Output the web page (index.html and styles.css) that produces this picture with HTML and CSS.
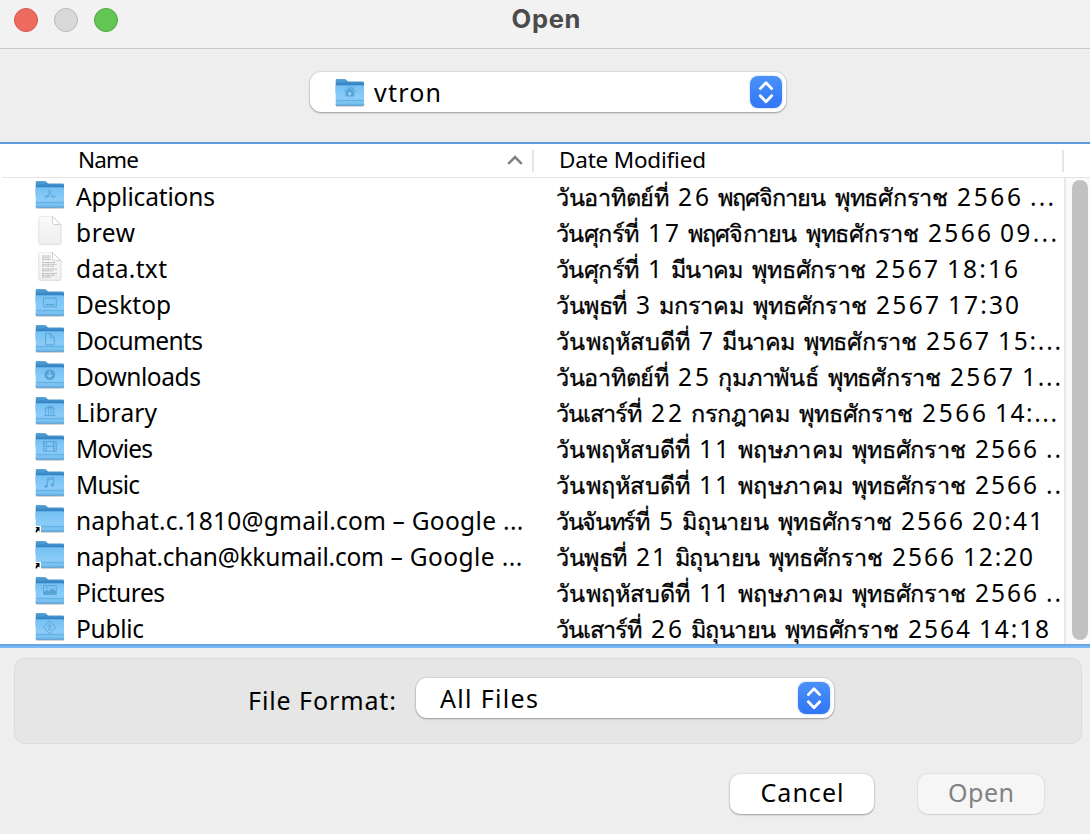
FILE: index.html
```html
<!DOCTYPE html>
<html lang="en">
<head>
<meta charset="utf-8">
<title>Open</title>
<link rel="stylesheet" href="styles.css">
</head>
<body>
<svg class="defs" aria-hidden="true">
  <defs>
    <linearGradient id="g-back" x1="0" y1="0" x2="0" y2="1"><stop offset="0" stop-color="#5ba6d8"/><stop offset=".45" stop-color="#2f7fc0"/></linearGradient>
    <linearGradient id="g-front" x1="0" y1="0" x2="0" y2="1"><stop offset="0" stop-color="#74c0f2"/><stop offset=".6" stop-color="#8accf8"/><stop offset="1" stop-color="#71bcec"/></linearGradient>
    <linearGradient id="g-page" x1="0" y1="0" x2="0" y2="1"><stop offset="0" stop-color="#fafafa"/><stop offset="1" stop-color="#efefef"/></linearGradient>
    <symbol id="folder" viewBox="0 0 30 30">
      <rect x=".8" y="25" width="28.400" height="4" rx="1.500" fill="#000" opacity=".12"/>
      <rect x="1" y="25" width="28" height="3.300" rx="1" fill="#000" opacity=".2"/>
      <path d="M.7 2.200Q.7 1 1.900 1H9.500q1 0 1.800.8l1.200 1.200q.7.500 1.600.500h13.500q1.400 0 1.400 1.400V15H.7z" fill="url(#g-back)"/>
      <path d="M.7 8.600Q.7 7.200 2.100 7.200h25.500q1.400 0 1.400 1.400v17.600q0 1.300-1.300 1.300H2q-1.300 0-1.300-1.300z" fill="url(#g-front)"/>
      <path d="M1 22.600H29" stroke="#5aaee3" stroke-width=".9"/>
      <path d="M.9 26.100q0 1.100 1.100 1.100h25.700q1.100 0 1.100-1.100" fill="none" stroke="#4b9bd2" stroke-width=".8"/>
    </symbol>
    <symbol id="page" viewBox="0 0 30 30">
      <path d="M5 .9h13l8.500 8.500V27q0 2-2 2H5.500q-2 0-2-2V2.600Q3.500.900 5 .900z" fill="#000" opacity=".12"/>
      <path d="M5.700.5H17.500l8.300 8v17.700q0 1.900-1.900 1.900H5.700q-1.900 0-1.900-1.900V2.400Q3.800.5 5.700.5z" fill="url(#g-page)" stroke="#dedede" stroke-width=".6"/>
      <path d="M17.500.6v6q0 2 2 2h6.300z" fill="#fff" stroke="#bdbdbd" stroke-width=".7"/>
    </symbol>
    <symbol id="alias" viewBox="0 0 6 8">
      <path d="M0 0h6v8H0z" fill="#fff"/><path d="M.5 1.500h4v4.500l-1.200-1.100Q2 5.300 2 7L.6 6.800Q.400 4.600 1.900 3.300z" fill="#000"/>
    </symbol>
    <symbol id="updown" viewBox="0 0 32 32">
      <path d="M10.300 12.600 16 6.700l5.700 5.900M10.300 19.800 16 25.700l5.700-5.900" fill="none" stroke="#fff" stroke-width="2.800" stroke-linecap="round" stroke-linejoin="round"/>
    </symbol>
  </defs>
</svg>

<header class="titlebar">
  <span class="light red"></span><span class="light grey"></span><span class="light green"></span>
  <h1 class="title"><span data-w="69">Open</span></h1>
</header>

<div class="location">
  <div class="select select-path">
    <svg class="icon" viewBox="0 0 30 30"><use href="#folder"/><g class="mark"><path d="M8.500 14 14.800 8l6.300 6M18.500 8.500V11"/><path class="solid" d="M10.500 13.500 14.800 9.500l4.400 4V18.500h-8.700z"/><path class="hole" d="M13.500 14.300h2.600v3h-2.600z"/></g></svg>
    <span class="select-text" data-w="67">vtron</span>
    <span class="stepper"><svg viewBox="0 0 32 32"><use href="#updown"/></svg></span>
  </div>
</div>

<main class="list">
  <div class="list-head">
    <div class="col-name"><span data-w="61">Name</span><svg class="sort" viewBox="0 0 16 10"><path d="M2 8.200 8 2.200l6 6"/></svg></div>
    <div class="col-date"><span data-w="147">Date Modified</span></div>
  </div>
  <div class="list-body">
    <div class="rows">
      <div class="row"><svg class="icon" viewBox="0 0 30 30"><use href="#folder"/><g class="mark"><path d="M15.500 9.500 11.500 17.500M13.700 9.500 18.500 18M9 15.600h6M17 15.600h4M11 18l-.7 1"/></g></svg><span class="name" data-w="139">Applications</span>
        <div class="date"><b data-w="113">วันอาทิตย์ที่</b><i data-w="31">26</i><b data-w="108">พฤศจิกายน</b><b data-w="113">พุทธศักราช</b><i data-w="64">2566</i><i data-w="24">...</i></div></div>
      <div class="row"><svg class="icon" viewBox="0 0 30 30"><use href="#page"/></svg><span class="name" data-w="59">brew</span>
        <div class="date"><b data-w="83">วันศุกร์ที่</b><i data-w="31">17</i><b data-w="109">พฤศจิกายน</b><b data-w="113">พุทธศักราช</b><i data-w="63">2566</i><i data-w="57">09...</i></div></div>
      <div class="row"><svg class="icon" viewBox="0 0 30 30"><use href="#page"/><path class="lines" d="M7 4h9M7 5.800h8M7 7.600h9M7 10.500h13M7 12.300h15M7 14.100h12M7 17h15M7 18.800h11M7 21.500h15M7 23.300h13M7 25h9"/></svg><span class="name" data-w="91">data.txt</span>
        <div class="date"><b data-w="83">วันศุกร์ที่</b><i data-w="15">1</i><b data-w="72">มีนาคม</b><b data-w="114">พุทธศักราช</b><i data-w="63">2567</i><i data-w="71">18:16</i></div></div>
      <div class="row"><svg class="icon" viewBox="0 0 30 30"><use href="#folder"/><g class="mark"><path d="M8.500 9.500h12.800v8.800H8.500z"/><path class="solid" d="M10.500 15.300h9v1.500h-9z"/></g></svg><span class="name" data-w="95">Desktop</span>
        <div class="date"><b data-w="71">วันพุธที่</b><i data-w="15">3</i><b data-w="85">มกราคม</b><b data-w="114">พุทธศักราช</b><i data-w="63">2567</i><i data-w="71">17:30</i></div></div>
      <div class="row"><svg class="icon" viewBox="0 0 30 30"><use href="#folder"/><g class="mark"><path d="M10.500 8.700h5l3.800 4v7.600h-8.800zM15.400 8.700v4h4"/></g></svg><span class="name" data-w="127">Documents</span>
        <div class="date"><b data-w="134">วันพฤหัสบดีที่</b><i data-w="14">7</i><b data-w="73">มีนาคม</b><b data-w="113">พุทธศักราช</b><i data-w="63">2567</i><i data-w="63">15:...</i></div></div>
      <div class="row"><svg class="icon" viewBox="0 0 30 30"><use href="#folder"/><g class="mark"><circle class="solid" cx="14.800" cy="14" r="5.400"/><path class="light-line" d="M14.800 11v5.500M12.500 14.300l2.300 2.300 2.300-2.300"/></g></svg><span class="name" data-w="125">Downloads</span>
        <div class="date"><b data-w="113">วันอาทิตย์ที่</b><i data-w="31">25</i><b data-w="101">กุมภาพันธ์</b><b data-w="113">พุทธศักราช</b><i data-w="63">2567</i><i data-w="39">1...</i></div></div>
      <div class="row"><svg class="icon" viewBox="0 0 30 30"><use href="#folder"/><g class="mark"><path class="solid" d="M9 11.800 14.800 8.800l5.900 3z"/><path d="M10.700 12v6.500M13.400 12v6.500M16.100 12v6.500M18.800 12v6.500M8.800 19h12"/></g></svg><span class="name" data-w="81">Library</span>
        <div class="date"><b data-w="86">วันเสาร์ที่</b><i data-w="31">22</i><b data-w="99">กรกฎาคม</b><b data-w="114">พุทธศักราช</b><i data-w="64">2566</i><i data-w="62">14:...</i></div></div>
      <div class="row"><svg class="icon" viewBox="0 0 30 30"><use href="#folder"/><g class="mark"><path d="M8.500 9h12.800v9.600H8.500zM11.200 9v9.600M18.600 9v9.600M11.200 13.800h7.400"/><path d="M9.800 9.500v9M20 9.500v9" stroke-dasharray="1 1"/></g></svg><span class="name" data-w="77">Movies</span>
        <div class="date"><b data-w="134">วันพฤหัสบดีที่</b><i data-w="30">11</i><b data-w="105">พฤษภาคม</b><b data-w="114">พุทธศักราช</b><i data-w="62">2566</i><i data-w="15">..</i></div></div>
      <div class="row"><svg class="icon" viewBox="0 0 30 30"><use href="#folder"/><g class="mark"><path d="M12.300 17.500V10l6.300-1.300v7.500M12.300 11.600l6.300-1.300"/><circle class="solid" cx="11" cy="17.700" r="1.500"/><circle class="solid" cx="17.300" cy="16.500" r="1.500"/></g></svg><span class="name" data-w="64">Music</span>
        <div class="date"><b data-w="134">วันพฤหัสบดีที่</b><i data-w="30">11</i><b data-w="105">พฤษภาคม</b><b data-w="114">พุทธศักราช</b><i data-w="62">2566</i><i data-w="15">..</i></div></div>
      <div class="row"><svg class="icon" viewBox="0 0 30 30"><use href="#folder"/><use href="#alias" x="0" y="21.500" width="6" height="8"/></svg><span class="name"><span data-w="310">naphat.c.1810@gmail.com</span> <span data-w="131">– Google ...</span></span>
        <div class="date"><b data-w="94">วันจันทร์ที่</b><i data-w="14">5</i><b data-w="87">มิถุนายน</b><b data-w="114">พุทธศักราช</b><i data-w="62">2566</i><i data-w="71">20:41</i></div></div>
      <div class="row"><svg class="icon" viewBox="0 0 30 30"><use href="#folder"/><use href="#alias" x="0" y="21.500" width="6" height="8"/></svg><span class="name"><span data-w="308">naphat.chan@kkumail.com</span> <span data-w="132">– Google ...</span></span>
        <div class="date"><b data-w="71">วันพุธที่</b><i data-w="30">21</i><b data-w="85">มิถุนายน</b><b data-w="114">พุทธศักราช</b><i data-w="62">2566</i><i data-w="70">12:20</i></div></div>
      <div class="row"><svg class="icon" viewBox="0 0 30 30"><use href="#folder"/><g class="mark"><path d="M8.500 9h12.800v9H8.500z"/><path class="solid" d="M9 17.500v-2l3-2.300 2 1.500 3.500-3.200 3.500 3.500v2.500z"/><circle class="solid" cx="11.800" cy="11.300" r=".9"/></g></svg><span class="name" data-w="89">Pictures</span>
        <div class="date"><b data-w="134">วันพฤหัสบดีที่</b><i data-w="30">11</i><b data-w="105">พฤษภาคม</b><b data-w="114">พุทธศักราช</b><i data-w="62">2566</i><i data-w="15">..</i></div></div>
      <div class="row"><svg class="icon" viewBox="0 0 30 30"><use href="#folder"/><g class="mark"><path d="M14.600 8.500 21 14.800l-6.400 6.300-6.400-6.300z"/><path d="M12.300 14l2-1.400 2.500 1.200M14.600 12.800v2.500l-1.500 3M14.600 15.300l1.900 2.700M14.600 11v.8"/></g></svg><span class="name" data-w="68">Public</span>
        <div class="date"><b data-w="86">วันเสาร์ที่</b><i data-w="31">26</i><b data-w="85">มิถุนายน</b><b data-w="114">พุทธศักราช</b><i data-w="62">2564</i><i data-w="70">14:18</i></div></div>
    </div>
    <div class="scroll"><div class="thumb"></div></div>
  </div>
</main>

<section class="format">
  <label class="format-label"><span data-w="148">File Format:</span></label>
  <div class="select select-format">
    <span class="select-text" data-w="98">All Files</span>
    <span class="stepper"><svg viewBox="0 0 32 32"><use href="#updown"/></svg></span>
  </div>
</section>

<footer class="actions">
  <button class="btn btn-cancel"><span data-w="83">Cancel</span></button>
  <button class="btn btn-open" disabled><span data-w="66">Open</span></button>
</footer>
<script src="tracking.js"></script>
</body>
</html>
```
FILE: styles.css
```css
* { box-sizing: border-box; }
body {
  margin: 0;
  width: 1090px;
  height: 834px;
  overflow: hidden;
  display: flex;
  flex-direction: column;
  background: #eeeeee;
  color: #000;
  font: 24.5px/36px "Noto Sans", "Open Sans", sans-serif;
  white-space: nowrap;
}
.defs { position: absolute; width: 0; height: 0; }
[data-w] { display: inline-block; flex: none; }

.titlebar {
  flex: none;
  position: relative;
  height: 49px;
  padding: 8px 14px;
  display: flex;
  gap: 16px;
  background: #f2f2f2;
  border-bottom: 1px solid #c8c8c8;
}
.light { width: 24px; height: 24px; border-radius: 50%; border: 1px solid; }
.red { background: #ed6b5f; border-color: #d95549; }
.grey { background: #d9d9d9; border-color: #b9b9b9; }
.green { background: #62c655; border-color: #50a73f; }
.title {
  position: absolute;
  inset: 0 0 auto 2px;
  margin: 0;
  text-align: center;
  font: 700 25.5px/38px Inter, sans-serif;
  color: #4b4b4b;
}

.location { flex: none; height: 93px; padding: 23px 0 0 310px; }
.select {
  display: flex;
  align-items: center;
  height: 40px;
  background: #fff;
  border-radius: 11px;
  box-shadow: 0 0 1px 1px rgba(0, 0, 0, .07), 0 1px 2px rgba(0, 0, 0, .3);
}
.select-path { width: 476px; padding: 0 4px 0 25px; }
.select-path .icon { margin: 2px 9px 0 0; }
.select-format { width: 418px; padding: 0 4px 0 24px; }
.select-text { font-size: 25px; line-height: 40px; }
.stepper {
  margin-left: auto;
  width: 32px;
  height: 32px;
  border-radius: 8px;
  background: linear-gradient(#4a91f8, #3176f6);
  box-shadow: 0 0 2px rgba(50, 120, 246, .5);
}
.stepper svg { display: block; }

.list {
  flex: none;
  height: 506px;
  border-top: 2px solid #5f9bdc;
  border-bottom: 2px solid #7cb7f6;
  background: #fff;
}
.list-head {
  display: flex;
  height: 34px;
  margin-left: 2px;
  border-bottom: 1px solid #e3e3e3;
  font-size: 22.5px;
}
.col-name, .col-date { display: flex; height: 22px; margin-top: 6px; line-height: 20px; border-right: 2px solid #e5e5e5; }
.col-name { width: 532px; padding-left: 76px; justify-content: space-between; }
.col-date { width: 530px; padding-left: 25px; }
.sort { width: 16px; height: 10px; margin: 5px 9px 0 0; }
.sort path { fill: none; stroke: #808080; stroke-width: 2.6; stroke-linecap: round; }
.list-body { display: flex; height: 468px; overflow: hidden; border-bottom: 2px solid #69a6e4; }
.rows { width: 1066px; border-right: 2px solid #e9e9e9; overflow: hidden; padding-top: 1px; }
.row { display: flex; height: 36px; padding-left: 35px; }
.icon { flex: none; width: 30px; height: 30px; }
.row .icon { margin-top: 1px; }
.name { margin-left: 11px; line-height: 36px; }
.name [data-w] { vertical-align: top; }
.date {
  display: flex;
  gap: 9px;
  margin-left: auto;
  width: 508px;
  line-height: 36px;
}
.date b, .date i { font-weight: 400; font-style: normal; }
.date b { font-size: 23.5px; -webkit-text-stroke: .3px #000; }
.scroll { width: 24px; background: #fafafa; padding: 2px 2px 0 6px; }
.thumb { height: 460px; border-radius: 8px; background: #c1c1c1; }

.mark { fill: none; stroke: #56a3d8; stroke-width: .9; }
.mark .solid { fill: #56a3d8; stroke: none; }
.mark .hole { fill: #9ad4f8; stroke: none; }
.mark .light-line { stroke: #8fd0f9; stroke-width: 1.2; }
.row .mark { transform: translateY(.6px); }
.lines { fill: none; stroke: #a5a5a5; stroke-width: .8; stroke-dasharray: 2.5 .6 1.5 .5; }

.format {
  flex: none;
  display: flex;
  width: 1068px;
  height: 86px;
  margin: 10px 0 0 14px;
  padding: 19px 0 0 233px;
  background: #e6e6e6;
  border: 1px solid #dcdcdc;
  border-radius: 11px;
}
.format-label { width: 168px; line-height: 45px; font-size: 25px; }

.actions { display: flex; gap: 44px; padding: 30px 0 0 730px; }
.btn {
  height: 40px;
  padding: 0 0 4px;
  border: 0;
  border-radius: 10px;
  background: #fff;
  font: 25px/36px "Noto Sans", sans-serif;
  color: #000;
  box-shadow: 0 0 1px 1px rgba(0, 0, 0, .06), 0 1px 2px rgba(0, 0, 0, .3);
}
.btn-cancel { width: 144px; }
.btn-open { width: 126px; background: #f6f6f6; color: #828282; box-shadow: 0 0 1px 1px rgba(0, 0, 0, .05), 0 1px 1px rgba(0, 0, 0, .08); }
```
FILE: tracking.js
```js
// Tracks each label so that its glyphs span data-w pixels.
document.querySelectorAll('[data-w]').forEach(function (el) {
  var target = Number(el.dataset.w);
  var natural = el.getBoundingClientRect().width;
  el.style.letterSpacing = '1px';
  var count = Math.round(el.getBoundingClientRect().width - natural);
  var spacing = count > 1 ? (target - natural) / (count - 1) : 0;
  el.style.letterSpacing = spacing + 'px';
  el.style.marginRight = -spacing + 'px';
});
```
